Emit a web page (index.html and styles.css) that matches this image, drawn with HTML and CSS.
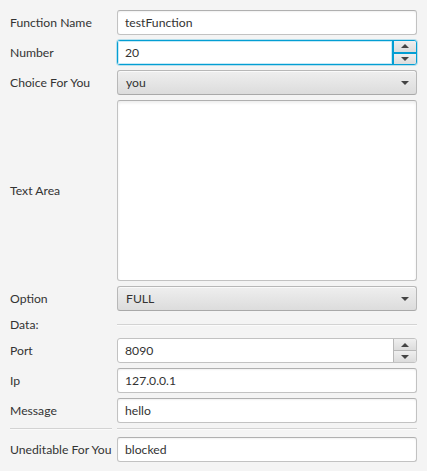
FILE: index.html
```html
<!DOCTYPE html>
<html>
<head>
<meta charset="utf-8">
<link rel="stylesheet" href="styles.css">
</head>
<body>
<div class="form">
  <div class="label">Function Name</div>
  <div class="field text"><span>testFunction</span></div>

  <div class="label">Number</div>
  <div class="spinner focused">
    <div class="spin-text"><span>20</span></div>
    <div class="spin-buttons">
      <div class="spin-btn"><span class="arrow-up"></span></div>
      <div class="spin-btn"><span class="arrow-down"></span></div>
    </div>
  </div>

  <div class="label">Choice For You</div>
  <div class="combo"><span>you</span><span class="arrow-down"></span></div>

  <div class="label">Text Area</div>
  <div class="field textarea"></div>

  <div class="label">Option</div>
  <div class="combo"><span>FULL</span><span class="arrow-down"></span></div>

  <div class="label">Data:</div>
  <div class="sep-cell"><div class="sep-line"></div></div>

  <div class="label">Port</div>
  <div class="spinner">
    <div class="spin-text"><span>8090</span></div>
    <div class="spin-buttons">
      <div class="spin-btn"><span class="arrow-up"></span></div>
      <div class="spin-btn"><span class="arrow-down"></span></div>
    </div>
  </div>

  <div class="label">Ip</div>
  <div class="field text"><span>127.0.0.1</span></div>

  <div class="label">Message</div>
  <div class="field text"><span>hello</span></div>

  <div class="sep-row"><div class="sep-line"></div></div>
  <div class="sep-row"><div class="sep-line"></div></div>

  <div class="label">Uneditable For You</div>
  <div class="field text"><span>blocked</span></div>
</div>
</body>
</html>
```

FILE: styles.css
```css
html, body {
  margin: 0;
  padding: 0;
  background: #f4f4f4;
}
body {
  font-family: Lato, "Noto Sans", sans-serif;
  font-size: 12.2px;
  color: #333333;
}
.form {
  display: grid;
  grid-template-columns: 102px 300px;
  grid-template-rows: 25px 25px 25px 181px 25px 17px 25px 25px 25px 4px 25px;
  column-gap: 5px;
  row-gap: 5px;
  padding: 10px;
}
.label {
  display: flex;
  align-items: center;
  white-space: nowrap;
}
.field {
  box-sizing: border-box;
  background: #ffffff;
  border: 1px solid #c2c2c2;
  border-top-color: #b0b0b0;
  border-radius: 3px;
  box-shadow: inset 0 1px 2px rgba(0,0,0,0.06);
}
.text {
  display: flex;
  align-items: center;
  padding: 0 7px;
}
.textarea {
  box-shadow: inset 0 2px 3px rgba(0,0,0,0.07);
}
.combo {
  box-sizing: border-box;
  display: flex;
  align-items: center;
  justify-content: space-between;
  padding: 0 7px 0 8px;
  border: 1px solid #b8b8b8;
  border-bottom-color: #a9a9a9;
  border-radius: 3px;
  background: linear-gradient(#efefef, #dcdcdc);
  box-shadow: inset 0 1px 0 rgba(255,255,255,0.7);
}
.arrow-down {
  width: 0;
  height: 0;
  border-left: 4px solid transparent;
  border-right: 4px solid transparent;
  border-top: 4px solid #444;
}
.arrow-up {
  width: 0;
  height: 0;
  border-left: 4px solid transparent;
  border-right: 4px solid transparent;
  border-bottom: 4px solid #444;
}
.spinner {
  box-sizing: border-box;
  display: flex;
  border: 1px solid #c2c2c2;
  border-radius: 3px;
  background: #fff;
}
.spin-text {
  flex: 1;
  display: flex;
  align-items: center;
  padding: 0 7px;
}
.spin-buttons {
  width: 22px;
  display: flex;
  flex-direction: column;
  border-left: 1px solid #b8b8b8;
}
.spin-btn {
  flex: 1;
  display: flex;
  align-items: center;
  justify-content: center;
  background: linear-gradient(#efefef, #dcdcdc);
}
.spin-btn + .spin-btn {
  border-top: 1px solid #b8b8b8;
}
.spin-btn:first-child { border-top-right-radius: 2px; }
.spin-btn:last-child { border-bottom-right-radius: 2px; }
.spinner.focused {
  border: 1px solid #039ed3;
  box-shadow: 0 0 0 1px rgba(3,158,211,0.25);
}
.spinner.focused .spin-text {
  box-shadow: inset 0 0 0 1px #c5e9f6;
}
.spinner.focused .spin-buttons {
  border-left: 2px solid #039ed3;
}
.spinner.focused .spin-btn + .spin-btn {
  border-top: 2px solid #039ed3;
}
.sep-cell {
  display: flex;
  align-items: center;
}
.sep-line {
  width: 100%;
  height: 1px;
  background: #d3d3d3;
  border-bottom: 1px solid #fbfbfb;
}
.sep-row {
  display: flex;
  align-items: flex-start;
}
```
